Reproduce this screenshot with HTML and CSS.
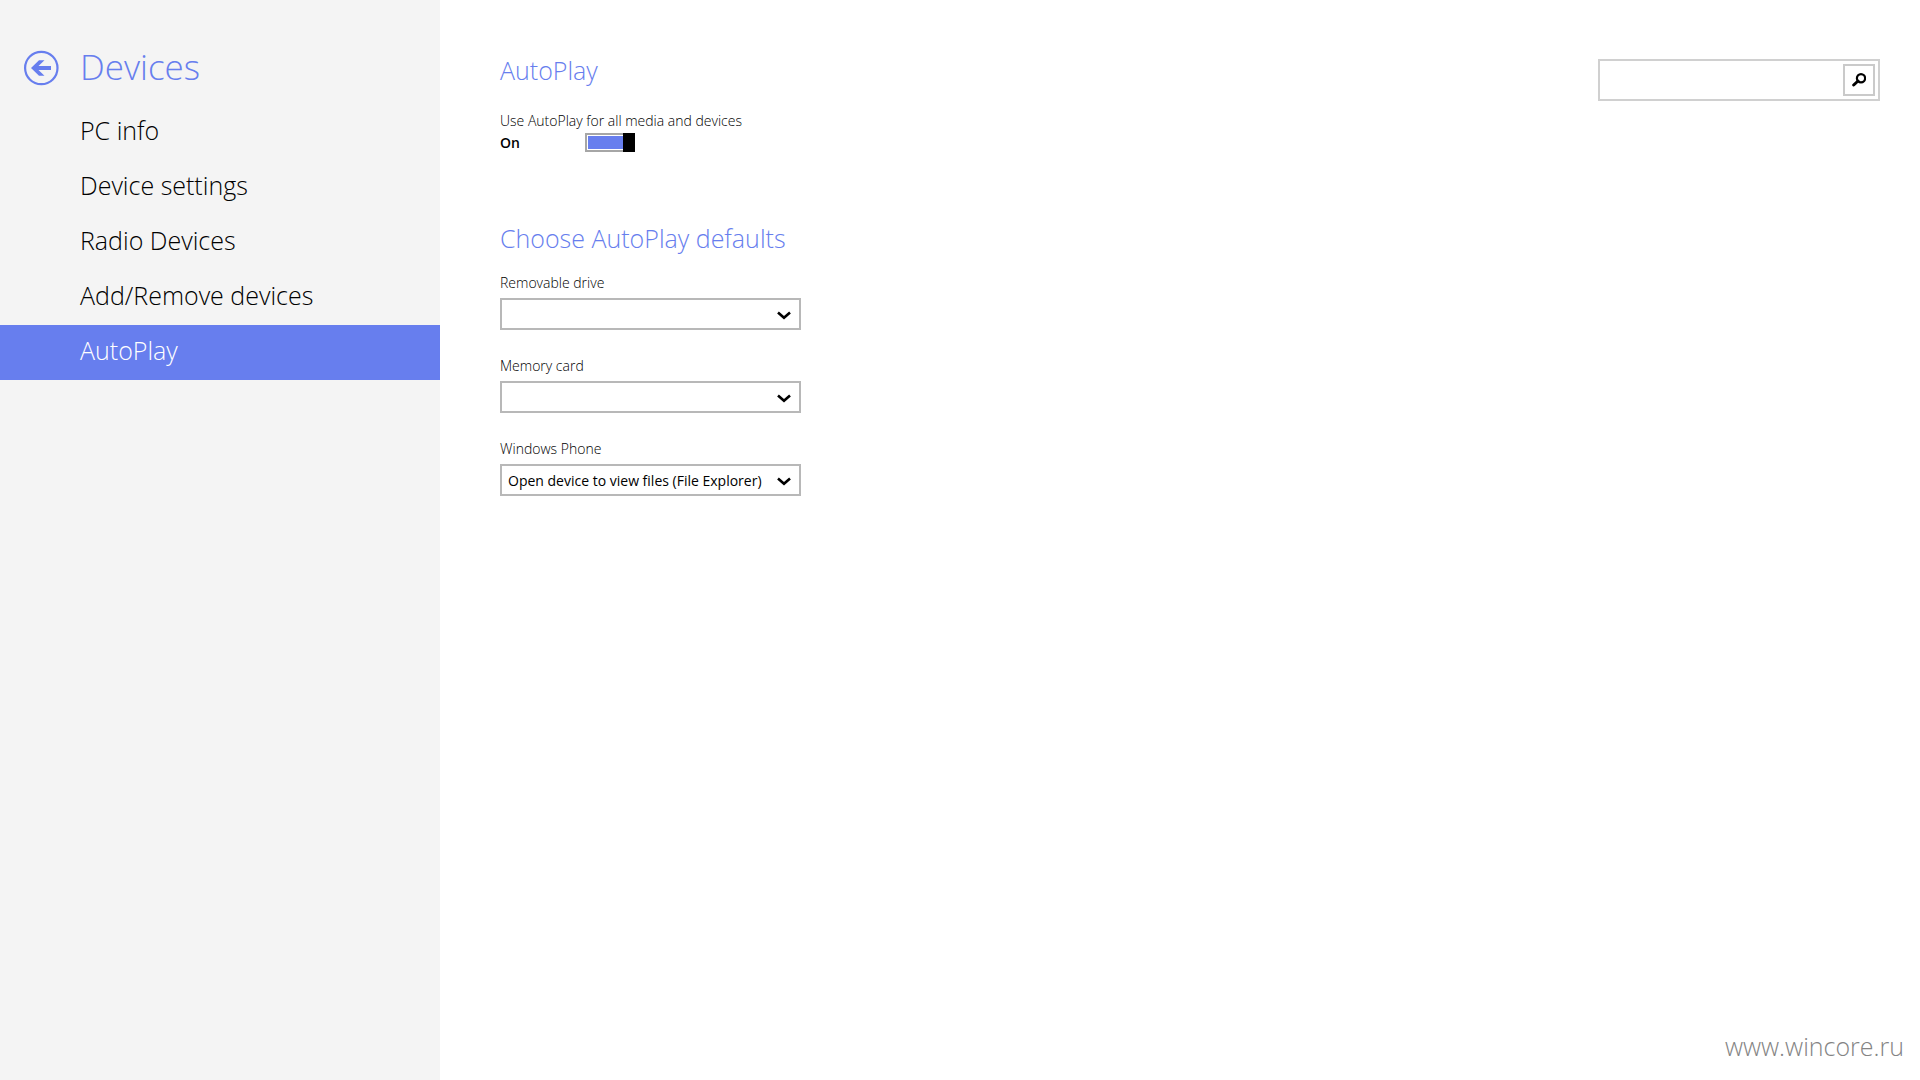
FILE: index.html
```html
<!DOCTYPE html>
<html lang="en">
<head>
    <meta charset="UTF-8">
    <meta name="viewport" content="width=device-width, initial-scale=1.0">
    <title>Devices</title>
    <link rel="stylesheet" href="styles.css">
</head>
<body>
    <aside class="sidebar">
        <header class="sidebar-header">
            <button class="back" type="button" aria-label="Back">
                <svg width="36" height="36" viewBox="0 0 36 36">
                    <circle cx="18.3" cy="18" r="16.2" fill="none" stroke="currentColor" stroke-width="2.2"/>
                    <path d="M8 18 L16 10.3 H21.5 L15.5 16 H28 V20 H15.5 L21.5 25.7 H16 Z" fill="currentColor"/>
                </svg>
            </button>
            <h1>Devices</h1>
        </header>
        <nav class="menu">
            <a href="#">PC info</a>
            <a href="#">Device settings</a>
            <a href="#">Radio Devices</a>
            <a href="#">Add/Remove devices</a>
            <a href="#" class="active">AutoPlay</a>
        </nav>
    </aside>
    <main class="content">
        <div class="settings">
            <section class="autoplay">
                <h2>AutoPlay</h2>
                <label for="autoplay">Use AutoPlay for all media and devices</label>
                <div class="toggle-row">
                    <span class="state">On</span>
                    <input type="checkbox" id="autoplay" class="toggle" checked>
                </div>
            </section>
            <section class="defaults">
                <h2>Choose AutoPlay defaults</h2>
                <div class="field">
                    <label for="removable">Removable drive</label>
                    <div class="dropdown">
                        <select id="removable"><option></option></select>
                        <svg width="14" height="10" viewBox="0 0 14 10"><path d="M1 1.5 L7 6.8 L13 1.5" fill="none" stroke="#000" stroke-width="2.6"/></svg>
                    </div>
                </div>
                <div class="field">
                    <label for="memory">Memory card</label>
                    <div class="dropdown">
                        <select id="memory"><option></option></select>
                        <svg width="14" height="10" viewBox="0 0 14 10"><path d="M1 1.5 L7 6.8 L13 1.5" fill="none" stroke="#000" stroke-width="2.6"/></svg>
                    </div>
                </div>
                <div class="field">
                    <label for="phone">Windows Phone</label>
                    <div class="dropdown">
                        <select id="phone"><option>Open device to view files (File Explorer)</option></select>
                        <svg width="14" height="10" viewBox="0 0 14 10"><path d="M1 1.5 L7 6.8 L13 1.5" fill="none" stroke="#000" stroke-width="2.6"/></svg>
                    </div>
                </div>
            </section>
        </div>
        <div class="side">
            <form class="search">
                <input type="text" aria-label="Search">
                <button type="button" aria-label="Search">
                    <svg width="14" height="14" viewBox="0 0 14 14">
                        <circle cx="9" cy="5.2" r="4.1" fill="none" stroke="#000" stroke-width="2.2"/>
                        <path d="M6 8 L1.7 12" stroke="#000" stroke-width="3" stroke-linecap="round"/>
                    </svg>
                </button>
            </form>
            <a href="#" class="watermark">www.wincore.ru</a>
        </div>
    </main>
</body>
</html>
```
FILE: styles.css
```css
* {
    box-sizing: border-box;
}
body {
    display: flex;
    min-height: 100vh;
    margin: 0;
    background-color: white;
    color: black;
    font-family: "Open Sans", "Noto Sans", sans-serif;
    font-size: 14px;
    line-height: 20px;
}
h1, h2 {
    margin: 0;
    color: #677eee;
    font-weight: 300;
}
h1 {
    padding-bottom: 2px;
    font-size: 35px;
    line-height: 46px;
}
h2 {
    font-size: 25px;
    line-height: 36px;
}
a {
    text-decoration: none;
}
label {
    display: block;
    font-weight: 340;
}
button {
    display: flex;
    align-items: center;
    justify-content: center;
    padding: 0;
    cursor: pointer;
}
.sidebar {
    flex: 0 0 440px;
    background-color: #f4f4f4;
}
.sidebar-header {
    display: flex;
    align-items: center;
    gap: 21px;
    padding: 44px 23px 13px;
}
.back {
    border: none;
    background: none;
    color: #677eee;
}
.menu a {
    display: block;
    padding: 0 0 5px 80px;
    color: black;
    font-size: 25px;
    font-weight: 300;
    line-height: 50px;
}
.menu .active {
    background-color: #677eee;
    color: white;
}
.content {
    flex: 1;
    display: flex;
    justify-content: space-between;
    padding-left: 60px;
}
.settings {
    width: 301px;
    padding-top: 52px;
}
.autoplay h2 {
    margin-bottom: 23px;
}
.toggle-row {
    display: flex;
    align-items: center;
    height: 23px;
}
.state {
    width: 85px;
    font-weight: 600;
}
.toggle {
    appearance: none;
    display: flex;
    justify-content: flex-end;
    width: 50px;
    height: 19px;
    margin: 0;
    border: 2px solid #a6a6a6;
    border-right: none;
    background-color: #677eee;
    box-shadow: inset 0 0 0 1px white;
}
.toggle::after {
    content: "";
    width: 12px;
    margin: -2px 0;
    background-color: black;
}
.toggle:not(:checked) {
    justify-content: flex-start;
    border-right: 2px solid #a6a6a6;
    background-color: #a6a6a6;
}
.defaults {
    margin-top: 66px;
}
.defaults h2 {
    margin-bottom: 17px;
}
.field {
    margin-bottom: 26px;
}
.field label {
    margin-bottom: 5px;
}
.dropdown {
    display: grid;
    align-items: center;
}
.dropdown select, .dropdown svg {
    grid-area: 1 / 1;
}
.dropdown select {
    appearance: none;
    height: 32px;
    padding: 2px 30px 0 6px;
    border: 2px solid #b8b8b8;
    border-radius: 0;
    background-color: white;
    color: black;
    font: inherit;
}
.dropdown svg {
    justify-self: end;
    margin-right: 10px;
    margin-top: 4px;
    pointer-events: none;
}
.side {
    display: flex;
    flex-direction: column;
    justify-content: space-between;
    align-items: flex-end;
    padding: 59px 16px 14px 0;
}
.search {
    display: flex;
    width: 282px;
    margin-right: 24px;
    padding: 3px;
    border: 2px solid #d0d0d0;
}
.search input {
    flex: 1;
    min-width: 0;
    border: none;
    outline: none;
    font: inherit;
}
.search button {
    width: 32px;
    height: 32px;
    border: 2px solid #cacaca;
    background-color: white;
}
.watermark {
    color: #848484;
    font-size: 25px;
    font-weight: 300;
    line-height: 40px;
}
```
